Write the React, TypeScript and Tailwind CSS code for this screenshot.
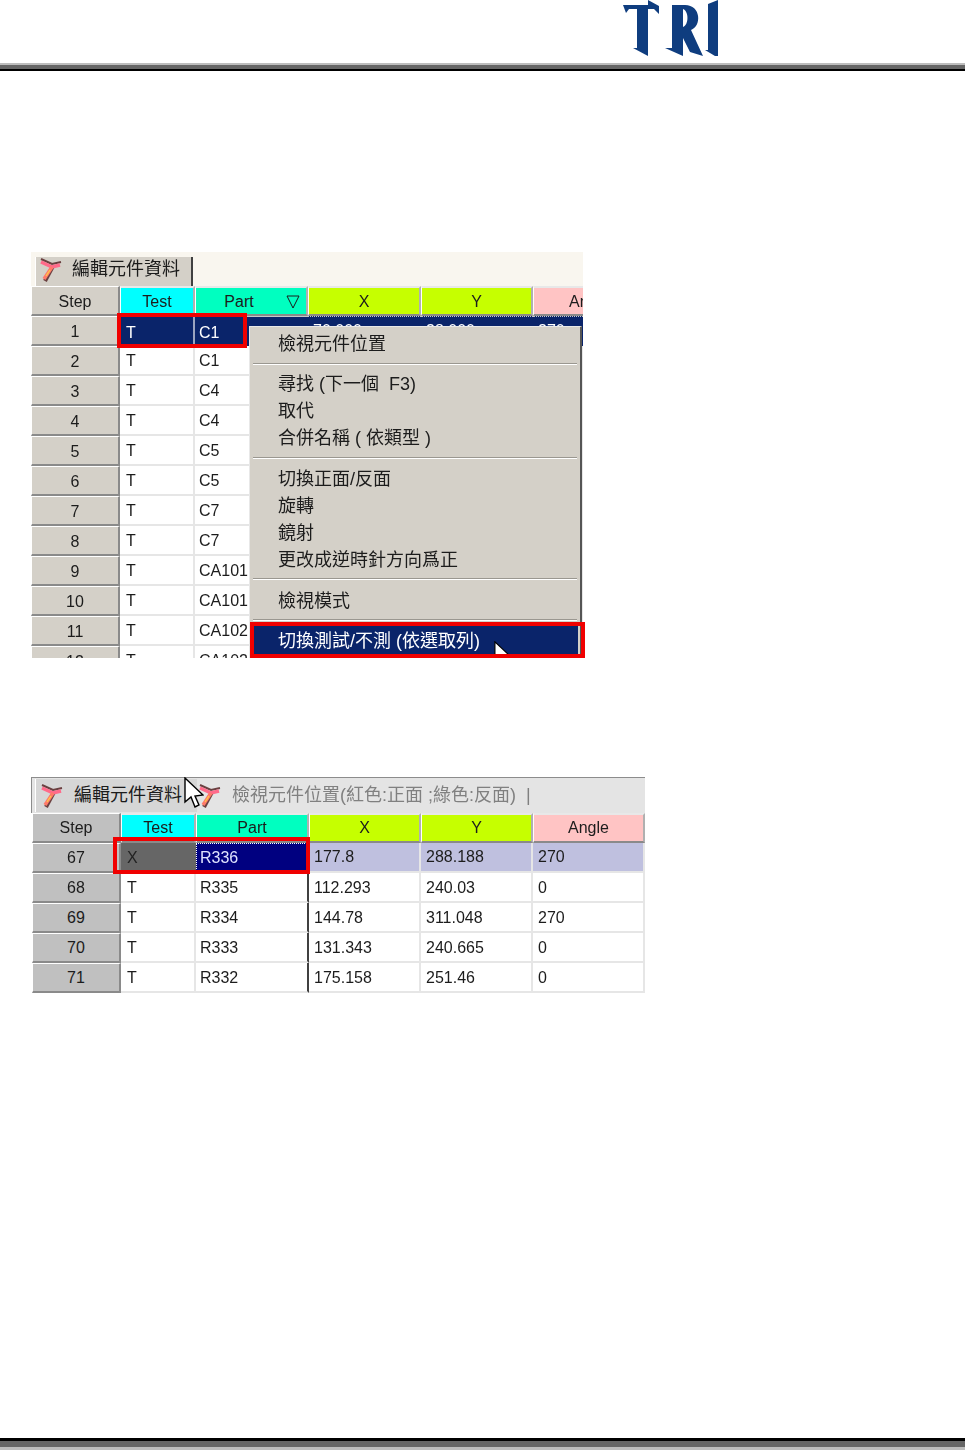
const stepCell =
  "flex items-center justify-center h-[30px] pt-[2px] bg-[#d4d0c8] border-t border-l border-t-white border-l-white border-b-2 border-r-2 border-b-[#8a8a8a] border-r-[#8a8a8a]";
const stepCellGray =
  "flex items-center justify-center h-[30px] bg-[#c0c0c0] border-t border-l border-t-white border-l-white border-b-2 border-r-2 border-b-[#8a8a8a] border-r-[#8a8a8a]";
const headCell =
  "flex items-center justify-center h-[30px] border-t-2 border-l border-t-[#e8e8e8] border-l-white border-b-2 border-r-2 border-b-[#8a8a8a] border-r-[#b0b0b0]";
const bodyCell =
  "flex items-center h-[30px] pt-[2px] bg-white border-b-2 border-r-2 border-b-[#e6e6e6] whitespace-nowrap overflow-hidden";
const navyCell =
  "flex items-center h-[30px] bg-[#0a246a] text-white border-t border-t-[#c8c8c8] whitespace-nowrap";
const pickedCell =
  "flex items-center h-[30px] pl-[5px] bg-[#bfc0df] border-b-2 border-r-2 border-b-[#e6e6e6] border-r-[#e6e6e6] whitespace-nowrap";

const rows1 = [
  ["2", "C1"],
  ["3", "C4"],
  ["4", "C4"],
  ["5", "C5"],
  ["6", "C5"],
  ["7", "C7"],
  ["8", "C7"],
  ["9", "CA101"],
  ["10", "CA101"],
  ["11", "CA102"],
  ["12", "CA102"],
];

const rows2 = [
  ["68", "R335", "112.293", "240.03", "0"],
  ["69", "R334", "144.78", "311.048", "270"],
  ["70", "R333", "131.343", "240.665", "0"],
  ["71", "R332", "175.158", "251.46", "0"],
];

function TRILogo() {
  return (
    <svg width="97" height="57" viewBox="0 0 97 57" className="block blur-[0.5px]">
      <g fill="#0f3d7f" fillRule="evenodd">
        <path d="M0 5 H25 V0 L36 6 V14 L31 9 H25 V56 L10 48 H14 V9 H6 L3 13 Z" />
        <path d="M49 5 H62 C78 5 79 26 68 30 L80 56 L67 52 L60 38 V56 L42 48 H49 Z M60 9 V27 C66 25 66 11 60 9 Z" />
        <path d="M85 4 L95 0 V56 H92 L82 50 H85 Z" />
      </g>
    </svg>
  );
}

function TabIcon() {
  return (
    <svg width="24" height="24" viewBox="0 0 24 24" className="block shrink-0">
      <path d="M3 1 L14 6 L23 4" fill="none" stroke="#6a4040" strokeWidth="2" />
      <path d="M15 8 L7 23" fill="none" stroke="#6a4040" strokeWidth="4" />
      <path d="M3 4 L14 9 L22 7" fill="none" stroke="#ff6a8a" strokeWidth="3.5" />
      <path d="M14 9 L6 21" fill="none" stroke="#ff7a6a" strokeWidth="3.5" />
      <path d="M12 12 L8 18" fill="none" stroke="#ffd040" strokeWidth="1.2" />
    </svg>
  );
}

function Cursor({ className }: { className: string }) {
  return (
    <svg viewBox="0 0 20 32" className={className}>
      <path
        d="M1 1 V25 L7 20 L11 30 L15 28 L11 19 L19 18 Z"
        fill="white"
        stroke="black"
        strokeWidth="1.4"
      />
    </svg>
  );
}

function Separator({ className }: { className: string }) {
  return <div className={`${className} mx-[3px] h-[2px] bg-[#9a9790] border-b border-white`} />;
}

function MenuItem({ label }: { label: string }) {
  return <div className="flex items-center h-[27px] pl-[28px] whitespace-pre">{label}</div>;
}

function FirstTable() {
  return (
    <div className="relative w-[552px] h-[406px] blur-[0.4px]">
      <div className="w-[552px] h-[406px] overflow-hidden text-[16px] text-[#1c1c1c]">
        <div className="flex items-start h-[34px] pt-[5px] pl-1 bg-[#f9f6ef]">
          <div className="flex items-center h-[29px] w-[158px] pb-[4px] pl-[2px] bg-[#d4d0c8] border-l border-white border-r-2 border-r-[#404040] text-[18px]">
            <TabIcon />
            <span className="ml-[10px] whitespace-nowrap">編輯元件資料</span>
          </div>
        </div>
        <div className="grid grid-cols-[89px_75px_113px_113px_112px_50px]">
          <div className={stepCell}>Step</div>
          <div className={`${headCell} pt-[2px] bg-[#00ffff]`}>Test</div>
          <div className={`${headCell} pt-[2px] relative bg-[#00ffc0]`}>
            <span className="mr-[24px]">Part</span>
            <svg width="14" height="14" viewBox="0 0 14 14" className="absolute right-[6px] top-[7px]">
              <path d="M1 1 H13 L7 13 Z" fill="none" stroke="#1c1c1c" strokeWidth="1" />
            </svg>
          </div>
          <div className={`${headCell} pt-[2px] bg-[#c6ff00]`}>X</div>
          <div className={`${headCell} pt-[2px] bg-[#c6ff00]`}>Y</div>
          <div className="flex items-center h-[30px] pt-[2px] pl-[35px] bg-[#ffc4c4] border-t-2 border-l border-t-[#e8e8e8] border-l-white border-b-2 border-b-[#8a8a8a] overflow-hidden">
            Angle
          </div>

          <div className={stepCell}>1</div>
          <div className={`${navyCell} pt-[2px] pl-[6px] border-r-2 border-r-[#9aa4c0]`}>T</div>
          <div className={`${navyCell} pt-[2px] pl-[4px]`}>C1</div>
          <div className={`${navyCell} pb-[2px] pl-[5px] border-dotted`}>70.000</div>
          <div className={`${navyCell} pb-[2px] pl-[5px] border-dotted`}>38.000</div>
          <div className={`${navyCell} pb-[2px] pl-[5px] border-dotted`}>270</div>

          {rows1.map(([step, part]) => (
            <div key={step} className="contents">
              <div className={stepCell}>{step}</div>
              <div className={`${bodyCell} pl-[6px] border-r-[#e6e6e6]`}>T</div>
              <div className={`${bodyCell} pl-[4px] border-r-[#e6e6e6]`}>{part}</div>
              <div className={`${bodyCell} border-r-[#e6e6e6]`} />
              <div className={`${bodyCell} border-r-[#e6e6e6]`} />
              <div className={`${bodyCell} border-r-[#e6e6e6]`} />
            </div>
          ))}
        </div>
      </div>

      <div className="absolute left-[218px] top-[74px] w-[333px] h-[332px] pt-[4px] bg-[#d4d0c8] border-t border-l border-t-[#e8e8e8] border-l-[#e8e8e8] border-r-2 border-r-[#555555] text-[18px] text-[#1c1c1c] overflow-hidden">
        <MenuItem label="檢視元件位置" />
        <Separator className="mt-[5px] mb-[6px]" />
        <MenuItem label="尋找 (下一個  F3)" />
        <MenuItem label="取代" />
        <MenuItem label="合併名稱 ( 依類型 )" />
        <Separator className="mt-[5px] mb-[7px]" />
        <MenuItem label="切換正面/反面" />
        <MenuItem label="旋轉" />
        <MenuItem label="鏡射" />
        <MenuItem label="更改成逆時針方向爲正" />
        <Separator className="mt-[4px] mb-[8px]" />
        <MenuItem label="檢視模式" />
        <Separator className="mt-[4px] mb-[5px]" />
        <div className="flex items-center h-[31px] mx-[2px] pl-[26px] bg-[#0a246a] text-white whitespace-nowrap">
          切換測試/不測 (依選取列)
        </div>
      </div>

      <Cursor className="absolute left-[463px] top-[389px] w-[17px] h-[27px] [clip-path:inset(0_0_10px_0)]" />
      <div className="absolute left-[86px] top-[61px] w-[130px] h-[35px] border-4 border-[#f00000]" />
      <div className="absolute left-[219px] top-[370px] w-[335px] h-[36px] border-4 border-[#f00000]" />
    </div>
  );
}

function SecondTable() {
  return (
    <div className="relative w-[614px] mt-[119px] blur-[0.4px] text-[16px] text-[#1c1c1c]">
      <div className="flex items-center h-[36px] pl-[3px] bg-[#e4e4e4] border-t border-l border-[#8c8c8c]">
        <div className="flex items-center h-[33px] w-[162px] pl-[3px] bg-[#d6d6d6] border-l border-white text-[18px] shrink-0">
          <TabIcon />
          <span className="ml-[11px] whitespace-nowrap">編輯元件資料</span>
        </div>
        <TabIcon />
        <span className="ml-[11px] text-[18px] text-[#808080] whitespace-nowrap">
          檢視元件位置(紅色:正面 ;綠色:反面)
        </span>
        <span className="ml-[10px] text-[18px] text-[#808080]">|</span>
      </div>
      <div className="grid grid-cols-[89px_75px_113px_112px_112px_112px] pl-px">
        <div className={stepCellGray}>Step</div>
        <div className={`${headCell} bg-[#00ffff]`}>Test</div>
        <div className={`${headCell} bg-[#00ffc0]`}>Part</div>
        <div className={`${headCell} bg-[#c6ff00]`}>X</div>
        <div className={`${headCell} bg-[#c6ff00]`}>Y</div>
        <div className={`${headCell} bg-[#ffc4c4]`}>Angle</div>

        <div className={stepCellGray}>67</div>
        <div className="flex items-center h-[30px] pl-[6px] bg-[#666666] text-[#222222]">X</div>
        <div className="flex items-center h-[30px] pl-[3px] bg-[#000080] text-[#dfe3ff] border border-dotted border-white">R336</div>
        <div className={pickedCell}>177.8</div>
        <div className={pickedCell}>288.188</div>
        <div className={pickedCell}>270</div>

        {rows2.map(([step, part, x, y, angle]) => (
          <div key={step} className="contents">
            <div className={stepCellGray}>{step}</div>
            <div className={`${bodyCell} pl-[6px] border-r-[#e6e6e6]`}>T</div>
            <div className={`${bodyCell} pl-[4px] border-r-[#404040]`}>{part}</div>
            <div className={`${bodyCell} pl-[5px] border-r-[#e6e6e6]`}>{x}</div>
            <div className={`${bodyCell} pl-[5px] border-r-[#e6e6e6]`}>{y}</div>
            <div className={`${bodyCell} pl-[5px] border-r-[#e6e6e6]`}>{angle}</div>
          </div>
        ))}
      </div>
      <Cursor className="absolute left-[153px] top-0 w-[20px] h-[32px]" />
      <div className="absolute left-[82px] top-[60px] w-[197px] h-[37px] border-4 border-[#f00000]" />
    </div>
  );
}

export default function App() {
  return (
    <div className="flex flex-col h-[1450px] w-[965px] bg-white overflow-hidden font-['Liberation_Sans','Noto_Sans_CJK_TC',sans-serif]">
      <header className="flex justify-start h-[63px] pl-[623px]">
        <TRILogo />
      </header>
      <div className="h-[2px] bg-[#bdbdbd]" />
      <div className="h-[4px] bg-[#666666]" />
      <div className="h-[2px] bg-black" />

      <main className="pl-[31px] pt-[181px]">
        <FirstTable />
        <SecondTable />
      </main>

      <footer className="mt-auto">
        <div className="h-[3px] bg-black" />
        <div className="h-[6px] bg-[#666666]" />
        <div className="h-[3px] bg-[#bdbdbd]" />
      </footer>
    </div>
  );
}
